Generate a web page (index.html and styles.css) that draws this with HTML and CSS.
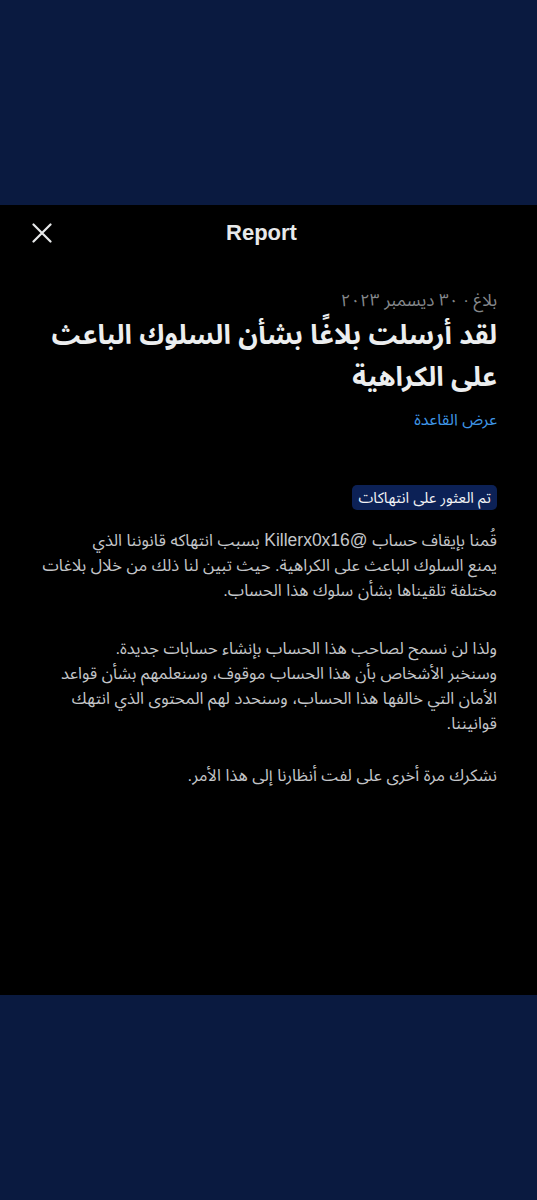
FILE: index.html
```html
<!DOCTYPE html>
<html lang="ar">
<head>
<meta charset="utf-8">
<title>Report</title>
<link rel="stylesheet" href="styles.css">
</head>
<body>
<main class="sheet">
  <header class="topbar">
    <button class="close" aria-label="Close">
      <svg viewBox="0 0 20 20" width="20" height="20"><path d="M1.5 1.5 L18.5 18.5 M18.5 1.5 L1.5 18.5" stroke="#e7e9ea" stroke-width="2.2" stroke-linecap="round" fill="none"/></svg>
    </button>
    <h1 class="title">Report</h1>
    <span class="spacer"></span>
  </header>
  <section class="content" dir="rtl">
    <p class="meta">بلاغ · ٣٠ ديسمبر ٢٠٢٣</p>
    <h2 class="headline">لقد أرسلت بلاغًا بشأن السلوك الباعث على الكراهية</h2>
    <a class="rule-link" href="#">عرض القاعدة</a>
    <div class="badge-row"><span class="badge">تم العثور على انتهاكات</span></div>
    <div class="body">
      <p>قُمنا بإيقاف حساب <span class="handle">@Killerx0x16</span> بسبب انتهاكه قانوننا الذي<br>يمنع السلوك الباعث على الكراهية. حيث تبين لنا ذلك من خلال بلاغات مختلفة تلقيناها بشأن سلوك هذا الحساب.</p>
      <p class="notice">ولذا لن نسمح لصاحب هذا الحساب بإنشاء حسابات جديدة.<br>وسنخبر الأشخاص بأن هذا الحساب موقوف، وسنعلمهم بشأن قواعد الأمان التي خالفها هذا الحساب، وسنحدد لهم المحتوى الذي انتهك قوانيننا.</p>
      <p class="closing">نشكرك مرة أخرى على لفت أنظارنا إلى هذا الأمر.</p>
    </div>
  </section>
</main>
</body>
</html>
```
FILE: styles.css
```css
html, body {
  margin: 0;
  padding: 0;
}
body {
  background: #0a1a40;
  width: 537px;
  height: 1200px;
  font-family: "Liberation Sans", "Noto Sans Arabic", "DejaVu Sans", sans-serif;
}
.sheet {
  margin-top: 205px;
  height: 790px;
  background: #000;
}
.topbar {
  display: grid;
  grid-template-columns: 1fr auto 1fr;
  align-items: center;
  height: 56px;
  padding: 0 14px 0 0;
  box-sizing: border-box;
}
.close {
  justify-self: start;
  margin-left: 32px;
  width: 20px;
  height: 20px;
  padding: 0;
  border: 0;
  background: none;
  display: flex;
}
.title {
  margin: 0;
  font-size: 22px;
  font-weight: 700;
  color: #e7e9ea;
}
.content {
  padding: 30px 40px 0 40px;
}
.meta {
  margin: 0;
  font-size: 17px;
  line-height: 20px;
  color: #85888c;
}
.headline {
  margin: 3px 0 0 0;
  font-size: 27px;
  line-height: 42px;
  font-weight: 700;
  color: #eceeef;
}
.rule-link {
  display: inline-block;
  margin-top: 12px;
  font-size: 16px;
  line-height: 20px;
  color: #3f96e6;
  text-decoration: none;
}
.badge-row {
  margin-top: 55px;
  display: flex;
}
.badge {
  background: #0c2156;
  color: #f2f3f5;
  font-size: 15px;
  line-height: 25px;
  padding: 0 6px;
  border-radius: 5px;
}
.body {
  margin-top: 18px;
}
.body p {
  margin: 0;
  font-size: 16.5px;
  line-height: 25px;
  color: #c4c6c9;
}
.body .notice {
  margin-top: 33px;
}
.body .closing {
  margin-top: 27px;
}
.handle {
  font-size: 17.5px;
}
```
